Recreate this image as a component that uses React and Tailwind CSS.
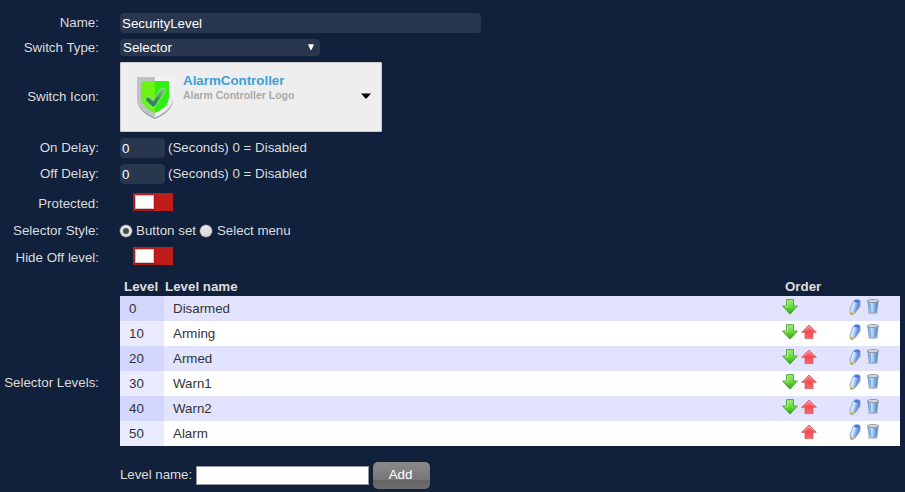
const levels = [
  [0, 'Disarmed'],
  [10, 'Arming'],
  [20, 'Armed'],
  [30, 'Warn1'],
  [40, 'Warn2'],
  [50, 'Alarm'],
];

function Row({ label, className, labelClass = '', children }) {
  return (
    <div className={`flex items-center ${className}`}>
      <div className={`mr-[21px] w-[99px] shrink-0 text-right whitespace-nowrap ${labelClass}`}>{label}</div>
      {children}
    </div>
  );
}

function Toggle() {
  return (
    <div className="ml-[13px] h-[18px] w-10 bg-[#c01c1c] p-[2px]">
      <div className="h-[14px] w-[19px] border border-[#d0c8c8] bg-white shadow-[0_1px_2px_rgba(0,0,0,0.35)]" />
    </div>
  );
}

function Radio({ checked }) {
  return (
    <span className="flex size-3 shrink-0 items-center justify-center rounded-full bg-gradient-to-b from-[#e8e8e8] to-[#d8d8d8] shadow-[0_0_0_0.5px_#777]">
      {checked && <span className="size-[6px] rounded-full bg-[#4c4c4c]" />}
    </span>
  );
}

function Shield() {
  return (
    <svg width="38" height="44" viewBox="0 0 38 44">
      <path d="M1 22h36v1.500c0 9-9 16-18 19.500C10 39.500 1 32.500 1 23.500z" fill="#95a0a5" />
      <path d="M1 1h36v21c0 9-9 15.500-18 19.500C10 37.500 1 31 1 22z" fill="#f0f2f3" />
      <path d="M1 1h18v40.500C10 37.500 1 31 1 22z" fill="#bdc3c7" />
      <path d="M5 5h14v32C12 34 5 29 5 21z" fill="#6cf414" />
      <path d="M19 5h14v16c0 8-7 13-14 16z" fill="#2df10d" />
      <path d="M12 23.500l5.500 5L27 14.500" fill="none" stroke="#8fd98f" strokeWidth="6" strokeLinecap="round" strokeLinejoin="round" />
      <path d="M12 23.500l5.500 5L27 14.500" fill="none" stroke="url(#checkFill)" strokeWidth="4" strokeLinecap="round" strokeLinejoin="round" />
    </svg>
  );
}

function Defs() {
  return (
    <svg width="0" height="0" className="absolute">
      <defs>
        <linearGradient id="checkFill" x1="0" y1="1" x2="1" y2="0">
          <stop offset="0" stopColor="#23834a" />
          <stop offset="0.5" stopColor="#36964f" />
          <stop offset="1" stopColor="#72c56b" />
        </linearGradient>
        <linearGradient id="greenFill" x1="0" y1="0" x2="0" y2="1">
          <stop offset="0" stopColor="#a2ec78" />
          <stop offset="0.5" stopColor="#69d83a" />
          <stop offset="1" stopColor="#27aa0c" />
        </linearGradient>
        <linearGradient id="redFill" x1="0" y1="0" x2="0" y2="1">
          <stop offset="0" stopColor="#ff8c8c" />
          <stop offset="0.5" stopColor="#f9474d" />
          <stop offset="1" stopColor="#ff686c" />
        </linearGradient>
        <linearGradient id="penFill" x1="0" y1="0" x2="1" y2="0.4">
          <stop offset="0" stopColor="#4f83e4" />
          <stop offset="0.4" stopColor="#e4eeff" />
          <stop offset="0.65" stopColor="#8db5f3" />
          <stop offset="1" stopColor="#365fae" />
        </linearGradient>
        <linearGradient id="binFill">
          <stop offset="0" stopColor="#5e92d1" />
          <stop offset="0.35" stopColor="#cbe2fa" />
          <stop offset="0.65" stopColor="#82b3e8" />
          <stop offset="1" stopColor="#4a7ec0" />
        </linearGradient>
      </defs>
    </svg>
  );
}

function Down() {
  return (
    <svg width="16" height="16" viewBox="0 0 16 16">
      <path d="M4.500.6h7v6.400h3.900L8 15.200.6 7h3.900z" fill="url(#greenFill)" stroke="#4d9f44" strokeWidth="0.900" strokeLinejoin="round" />
      <path d="M5.500 1.600v6.300H3" fill="none" stroke="#c4f5a8" strokeWidth="0.800" />
    </svg>
  );
}

function Up() {
  return (
    <svg width="16" height="16" viewBox="0 0 16 16">
      <path d="M8 1l7.400 7.300h-3.400v6.300H4V8.300H.6z" fill="url(#redFill)" stroke="#c9666c" strokeWidth="0.900" strokeLinejoin="round" />
      <path d="M2.800 7.500L8 2.400l5.200 5.100" fill="none" stroke="#ffb9b9" strokeWidth="0.600" />
    </svg>
  );
}

function Pen() {
  return (
    <svg width="12" height="16" viewBox="0 0 12 16">
      <path d="M11.600 4v3.500L6.500 14 4 15.500z" fill="#777" opacity="0.500" />
      <path d="M4.200 2.200C5.600-.2 11.200-.2 11.200 2.800c0 3-2.400 7.200-4.800 10.200L4 15.200c-1 .5-2.900-.2-2.800-1.700l-.2-3.300z" fill="url(#penFill)" stroke="#7390cb" strokeWidth="0.600" />
      <path d="M4.700 2.200C6.200.3 10.200.5 11 2.800 9.800 4 6.200 4 4.700 2.200z" fill="#4377df" />
      <path d="M1.200 12l4.300 1.700L4 15.200c-1 .4-2.800-.3-2.800-1.700z" fill="#ebc763" />
      <path d="M1.200 13.600l2.600 1.600c-1.200.6-2.700-.2-2.600-1.600z" fill="#9c6612" />
    </svg>
  );
}

function Bin() {
  return (
    <svg width="14" height="16" viewBox="0 0 14 16">
      <ellipse cx="7" cy="14" rx="5.500" ry="1.300" fill="#777" opacity="0.300" />
      <path d="M1.800 2.500h10.400L10.900 13c-1.500 1-6.300 1-7.800 0z" fill="url(#binFill)" stroke="#7191b4" strokeWidth="0.600" />
      <path d="M4.300 5l.7 7.600M9.700 5L9 12.600" stroke="#5a90d4" strokeWidth="0.600" />
      <ellipse cx="7" cy="2.100" rx="5.800" ry="1.600" fill="#c1c7cb" stroke="#83888b" strokeWidth="0.800" />
      <path d="M3 1.900h8" stroke="#eef1f3" strokeWidth="0.800" />
    </svg>
  );
}

export default function App() {
  return (
    <div className="h-[492px] w-[905px] overflow-hidden bg-[#11203b] pt-[10px] font-['Liberation_Sans',Arial,sans-serif] text-[13.33px] leading-4 text-[#ddd]">
      <Defs />
      <Row label="Name:" className="h-[26px]">
        <div className="h-5 w-[361px] rounded-[4px] bg-[#28374e] pl-[2px] leading-[21px] text-white">SecurityLevel</div>
      </Row>
      <Row label="Switch Type:" className="h-[23px]">
        <div className="flex h-[17px] w-[200px] items-center justify-between rounded-[4px] bg-[#28374e] pr-[6px] pl-[3px] text-white">
          <span>Selector</span>
          <svg width="6" height="7" viewBox="0 0 6 7"><path d="M0 .3h6L3.500 6h-1z" fill="#fff" /></svg>
        </div>
      </Row>
      <Row label="Switch Icon:" className="h-[76px]">
        <div className="flex h-[70px] w-[262px] rounded-[1px] border border-[#ccc] bg-[#eee] pt-[13px] pl-[15px]">
          <Shield />
          <div className="ml-[9px] w-[178px]">
            <div className="-mt-[3px] font-bold text-[#419fd4]">AlarmController</div>
            <div className="-mt-px text-[10.5px] leading-[14px] font-bold text-[#aaa]">Alarm Controller Logo</div>
          </div>
          <svg width="10" height="6" viewBox="0 0 10 6" className="mt-[17px]"><path d="M0 .5h10L5.500 5.500h-1z" fill="#000" /></svg>
        </div>
      </Row>
      {['On Delay:', 'Off Delay:'].map((label) => (
        <Row key={label} label={label} className="h-[26px]">
          <div className="mr-[3px] h-5 w-[45px] rounded-[4px] bg-[#28374e] pl-[2px] leading-[21px] text-white">0</div>
          <span>(Seconds) 0 = Disabled</span>
        </Row>
      ))}
      <Row label="Protected:" className="h-[30px]" labelClass="pt-[3px]"><Toggle /></Row>
      <Row label="Selector Style:" className="h-[27px]">
        <Radio checked />
        <span className="mr-1 ml-1">Button set</span>
        <Radio />
        <span className="ml-[5px] -tracking-[0.05px]">Select menu</span>
      </Row>
      <Row label="Hide Off level:" className="h-6" labelClass="pt-[3px]"><Toggle /></Row>
      <Row label="Selector Levels:" className="mt-2 h-[213px]">
        <div className="h-full w-[780px]">
          <div className="flex h-5 items-center pt-px font-bold">
            <div className="w-11 pl-1">Level</div>
            <div className="w-[621px] pl-px">Level name</div>
            <div>Order</div>
          </div>
          {levels.map(([value, name], i) => (
            <div key={value} className={`flex h-[25px] items-center text-[#333] ${i % 2 ? 'bg-white' : 'bg-[#e2e4ff]'}`}>
              <div className={`h-full w-11 pl-[9px] leading-[25px] ${i % 2 ? 'bg-[#eaebff]' : 'bg-[#d3d6ff]'}`}>{value}</div>
              <div className="w-[618px] pl-[9px]">{name}</div>
              <div className="flex h-full w-[67px] gap-[3px] pt-[3px]">
                <div className="w-4">{i < 5 && <Down />}</div>
                {i > 0 && <Up />}
              </div>
              <div className="flex h-full gap-[5px] pt-[3px]">
                <Pen />
                <Bin />
              </div>
            </div>
          ))}
          <div className="mt-4 flex h-[27px] items-center">
            <span className="-mt-px w-[76px] whitespace-nowrap -tracking-[0.05px]">Level name:</span>
            <div className="h-[19px] w-[173px] border border-[#999] bg-white" />
            <div className="ml-1 h-[27px] w-[57px] rounded-[5px] bg-[linear-gradient(#8a8a8a,#777_66%,#666_67%,#6c6c6c)] pr-[2px] text-center leading-[26px] text-white">Add</div>
          </div>
        </div>
      </Row>
    </div>
  );
}
